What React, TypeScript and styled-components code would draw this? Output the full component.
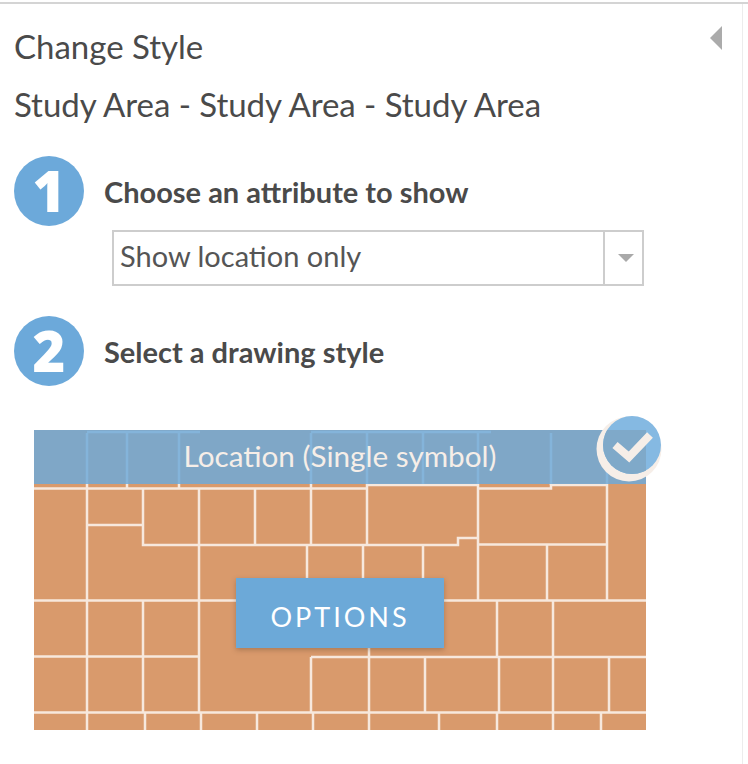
import React from 'react';
import styled, { createGlobalStyle } from 'styled-components';

const GlobalStyle = createGlobalStyle`
  html, body {
    margin: 0;
    padding: 0;
    background: #fff;
  }
  body {
    font-family: Lato, "Open Sans", sans-serif;
  }
`;

const Page = styled.div`
  width: 748px;
  height: 764px;
  box-sizing: border-box;
  overflow: hidden;
`;

const TopRule = styled.div`
  height: 2px;
  margin-top: 2px;
  background: #d4d4d4;
`;

const Panel = styled.div`
  position: relative;
  width: 743px;
  height: 760px;
  box-sizing: border-box;
  padding: 21px 0 0 14px;
  border-right: 1px solid #ececec;
`;

const CollapseArrow = styled.svg`
  position: absolute;
  top: 22px;
  right: 20px;
`;

const Title = styled.div`
  font-size: 33px;
  line-height: 42px;
  color: #4a4a4a;
  height: 42px;
`;

const SubTitle = styled(Title)`
  margin-top: 16px;
  letter-spacing: -0.05px;
`;

const StepRow = styled.div<{ $top: number }>`
  display: flex;
  align-items: center;
  gap: 20px;
  margin-top: ${p => p.$top}px;
`;

const StepBadge = styled.div`
  width: 70px;
  height: 70px;
  flex: none;
  border-radius: 50%;
  background: #6ca9da;
  color: #fff;
  font-family: "Open Sans", sans-serif;
  font-size: 56px;
  font-weight: 800;
  line-height: 68px;
  text-align: center;
`;

const StepLabel = styled.div`
  font-size: 29px;
  font-weight: 700;
  color: #4a4a4a;
  line-height: 36px;
  padding-top: 2px;
`;

const Select = styled.div`
  display: flex;
  width: 532px;
  height: 56px;
  box-sizing: border-box;
  margin: 4px 0 0 98px;
  border: 2px solid #cdcdcd;
`;

const SelectValue = styled.div`
  flex: 1;
  padding-left: 6px;
  font-size: 29px;
  line-height: 48px;
  color: #555;
`;

const SelectCaret = styled.div`
  width: 39px;
  box-sizing: border-box;
  padding-left: 4px;
  display: flex;
  align-items: center;
  justify-content: center;
  border-left: 2px solid #cdcdcd;
`;

const StyleCard = styled.div`
  position: relative;
  width: 612px;
  height: 300px;
  margin: 44px 0 0 20px;
`;

const MapArt = styled.svg`
  display: block;
`;

const CardBand = styled.div`
  position: absolute;
  top: 0;
  left: 0;
  right: 0;
  height: 54px;
  background: rgba(108, 169, 218, 0.83);
  color: #f6eee8;
  font-size: 29.7px;
  line-height: 52px;
  text-align: center;
`;

const CheckBadge = styled.svg`
  position: absolute;
  top: -14px;
  left: 562px;
`;

const OptionsButton = styled.div`
  position: absolute;
  left: 202px;
  top: 148px;
  width: 208px;
  height: 70px;
  background: #6ca9d8;
  box-shadow: 0 2px 5px rgba(90, 60, 40, 0.35);
  color: #fff;
  font-size: 27px;
  letter-spacing: 3px;
  line-height: 78px;
  text-align: center;
`;

// map boundary lines, in page coordinates
const MAP_LINES = [
  'M87 433V730',
  'M127 433V488',
  'M179 433V488',
  'M87 432H200',
  'M311 432H491',
  'M34 488.5H367',
  'M367 485H478',
  'M478 488.5H551V485H607',
  'M143 488V545H458V538H478',
  'M87 525H143',
  'M199 488V545',
  'M255 488V545',
  'M311 433V545',
  'M367 433V545',
  'M423 433V485',
  'M478 433V601',
  'M551 433V485',
  'M607 433V601',
  'M478 544.5H607',
  'M307 545V601',
  'M363 545V601',
  'M423 545V601',
  'M547 545V601',
  'M199 545V712',
  'M34 600.5H646',
  'M143 601V712',
  'M369 601V712',
  'M497 601V657',
  'M553 601V730',
  'M34 656.5H199',
  'M311 657H646',
  'M311 657V712',
  'M425 657V712',
  'M499 657V712',
  'M609 657V712',
  'M34 712.5H646',
  'M145 713V730',
  'M201 713V730',
  'M257 713V730',
  'M313 713V730',
  'M369 713V730',
  'M439 713V730',
  'M497 713V730',
  'M601 713V730',
];

const App: React.FC = () => (
  <Page>
    <GlobalStyle />
    <TopRule />
    <Panel>
      <CollapseArrow width="12" height="24" viewBox="0 0 12 24">
        <polygon points="12,0 12,24 0,12" fill="#ababab" />
      </CollapseArrow>
      <Title>Change Style</Title>
      <SubTitle>Study Area - Study Area - Study Area</SubTitle>
      <StepRow $top={31}>
        <StepBadge>1</StepBadge>
        <StepLabel>Choose an attribute to show</StepLabel>
      </StepRow>
      <Select>
        <SelectValue>Show location only</SelectValue>
        <SelectCaret>
          <svg width="16" height="8" viewBox="0 0 16 8">
            <polygon points="0,0 16,0 8,8" fill="#a9a9a9" />
          </svg>
        </SelectCaret>
      </Select>
      <StepRow $top={30}>
        <StepBadge>2</StepBadge>
        <StepLabel>Select a drawing style</StepLabel>
      </StepRow>
      <StyleCard>
        <MapArt width="612" height="300" viewBox="34 430 612 300">
          <rect x="34" y="430" width="612" height="300" fill="#d99a6c" />
          {MAP_LINES.map(d => (
            <path key={d} d={d} fill="none" stroke="#f7e8dd" strokeWidth="2.5" />
          ))}
        </MapArt>
        <CardBand>Location (Single symbol)</CardBand>
        <CheckBadge width="66" height="66" viewBox="0 0 66 66">
          <defs>
            <clipPath id="badge-band">
              <rect x="0" y="14" width="50" height="54" />
            </clipPath>
          </defs>
          <circle cx="33" cy="33" r="32.5" fill="#f6eee8" />
          <circle cx="36" cy="29" r="29" fill="#85b9e2" />
          <circle cx="36" cy="29" r="29" fill="#7fa9c9" clipPath="url(#badge-band)" />
          <path d="M19 29L33 41L54 19" fill="none" stroke="#f6eee8" strokeWidth="8" />
        </CheckBadge>
        <OptionsButton>OPTIONS</OptionsButton>
      </StyleCard>
    </Panel>
  </Page>
);

export default App;
